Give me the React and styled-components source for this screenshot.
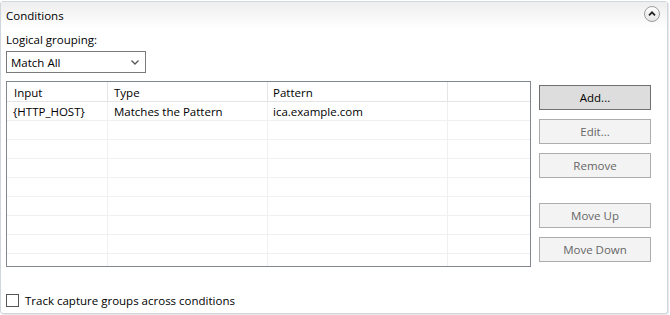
import React from "react";
import styled, { createGlobalStyle } from "styled-components";

const Global = createGlobalStyle`
  html, body { margin: 0; padding: 0; background: #ffffff; }
  body { font-family: "Open Sans", "Segoe UI", Arial, sans-serif; font-size: 11.5px; color: #000; }
  * { box-sizing: border-box; }
`;

const Page = styled.div`
  width: 670px;
  height: 315px;
  padding-top: 1px;
`;

const Panel = styled.section`
  width: 668px;
  height: 313px;
  border: 1px solid #cfd6dc;
  border-radius: 3px;
  box-shadow: 1px 1px 0 #e6eaee;
  display: flex;
  flex-direction: column;
  background: #fff;
`;

const Header = styled.header`
  height: 27px;
  padding: 6px 5px 0 5px;
  display: flex;
  align-items: flex-start;
  justify-content: space-between;
  background: linear-gradient(#eeeeee, #ffffff);
  line-height: 15px;
`;

const Title = styled.span`
  font-size: 11.5px;
`;

const CollapseBtn = styled.span`
  width: 16px;
  height: 16px;
  margin-top: -2px;
  margin-right: 2px;
  display: flex;
`;

const Body = styled.div`
  padding: 0 5px 0 5px;
  display: flex;
  flex-direction: column;
`;

const Label = styled.div`
  margin-top: 3px;
  line-height: 15px;
`;

const Select = styled.div`
  margin-top: 4px;
  width: 140px;
  height: 22px;
  border: 1px solid #7a7a7a;
  padding: 0 6px 0 4px;
  display: flex;
  align-items: center;
  justify-content: space-between;
  line-height: 15px;
`;

const Main = styled.div`
  margin-top: 8px;
  display: flex;
  align-items: flex-start;
`;

const Table = styled.div`
  width: 525px;
  height: 186px;
  border: 1px solid #828790;
  overflow: hidden;
  display: grid;
  grid-template-columns: 101px 160px 180px 1fr;
  grid-auto-rows: 19px;
  grid-template-rows: 20px;
  align-content: start;
`;

const Cell = styled.div`
  border-right: 1px solid ${(p) => (p.$head ? "#e5e5e5" : "#f0f0f0")};
  border-bottom: 1px solid ${(p) => (p.$head ? "#e5e5e5" : "#f0f0f0")};
  padding-left: ${(p) => p.$pad || 6}px;
  line-height: 15px;
  display: flex;
  align-items: center;
  padding-top: ${(p) => (p.$head ? 1 : 0)}px;
  white-space: nowrap;
  &:nth-child(4n) {
    border-right: none;
  }
`;

const Buttons = styled.div`
  margin-left: 8px;
  margin-top: 4px;
  display: flex;
  flex-direction: column;
  gap: 9px;
`;

const Button = styled.button`
  width: 112px;
  height: 25px;
  margin-top: ${(p) => (p.$spaced ? 16 : 0)}px;
  font-family: inherit;
  font-size: 11.5px;
  line-height: 15px;
  padding: 0;
  border: 1px solid ${(p) => (p.$primary ? "#707070" : "#adadad")};
  background: ${(p) => (p.$primary ? "#dddddd" : "#f3f3f3")};
  color: ${(p) => (p.$primary ? "#000000" : "#666666")};
`;

const CheckRow = styled.label`
  margin-top: 26px;
  display: flex;
  align-items: center;
  gap: 6px;
  height: 15px;
  line-height: 15px;
`;

const Box = styled.span`
  width: 13px;
  height: 13px;
  border: 1px solid #555555;
  background: #fff;
`;

const rows = [
  ["{HTTP_HOST}", "Matches the Pattern", "ica.example.com", ""],
  ...Array.from({ length: 8 }, () => ["", "", "", ""]),
];

export default function App() {
  return (
    <Page>
      <Global />
      <Panel>
        <Header>
          <Title>Conditions</Title>
          <CollapseBtn>
            <svg width="16" height="16" viewBox="0 0 16 16">
              <defs>
                <linearGradient id="cg" x1="0" y1="0" x2="0" y2="1">
                  <stop offset="0" stopColor="#ffffff" />
                  <stop offset="1" stopColor="#e4e4e4" />
                </linearGradient>
              </defs>
              <circle cx="8" cy="8" r="7.5" fill="url(#cg)" stroke="#9c9c9c" />
              <path d="M5 9.3 L8 6.3 L11 9.3" fill="none" stroke="#222" strokeWidth="1.8" />
            </svg>
          </CollapseBtn>
        </Header>
        <Body>
          <Label>Logical grouping:</Label>
          <Select>
            <span>Match All</span>
            <svg width="8" height="5" viewBox="0 0 8 5">
              <path d="M0.5 0.5 L4 4 L7.5 0.5" fill="none" stroke="#555" strokeWidth="1.3" />
            </svg>
          </Select>
          <Main>
            <Table>
              <Cell $head $pad={7}>Input</Cell>
              <Cell $head>Type</Cell>
              <Cell $head $pad={5}>Pattern</Cell>
              <Cell $head />
              {rows.map((r, i) =>
                r.map((c, j) => (
                  <Cell key={`${i}-${j}`} $pad={j === 0 ? 6 : j === 2 ? 5 : 6}>
                    {c}
                  </Cell>
                ))
              )}
            </Table>
            <Buttons>
              <Button $primary>Add...</Button>
              <Button>Edit...</Button>
              <Button>Remove</Button>
              <Button $spaced>Move Up</Button>
              <Button>Move Down</Button>
            </Buttons>
          </Main>
          <CheckRow>
            <Box />
            <span>Track capture groups across conditions</span>
          </CheckRow>
        </Body>
      </Panel>
    </Page>
  );
}
